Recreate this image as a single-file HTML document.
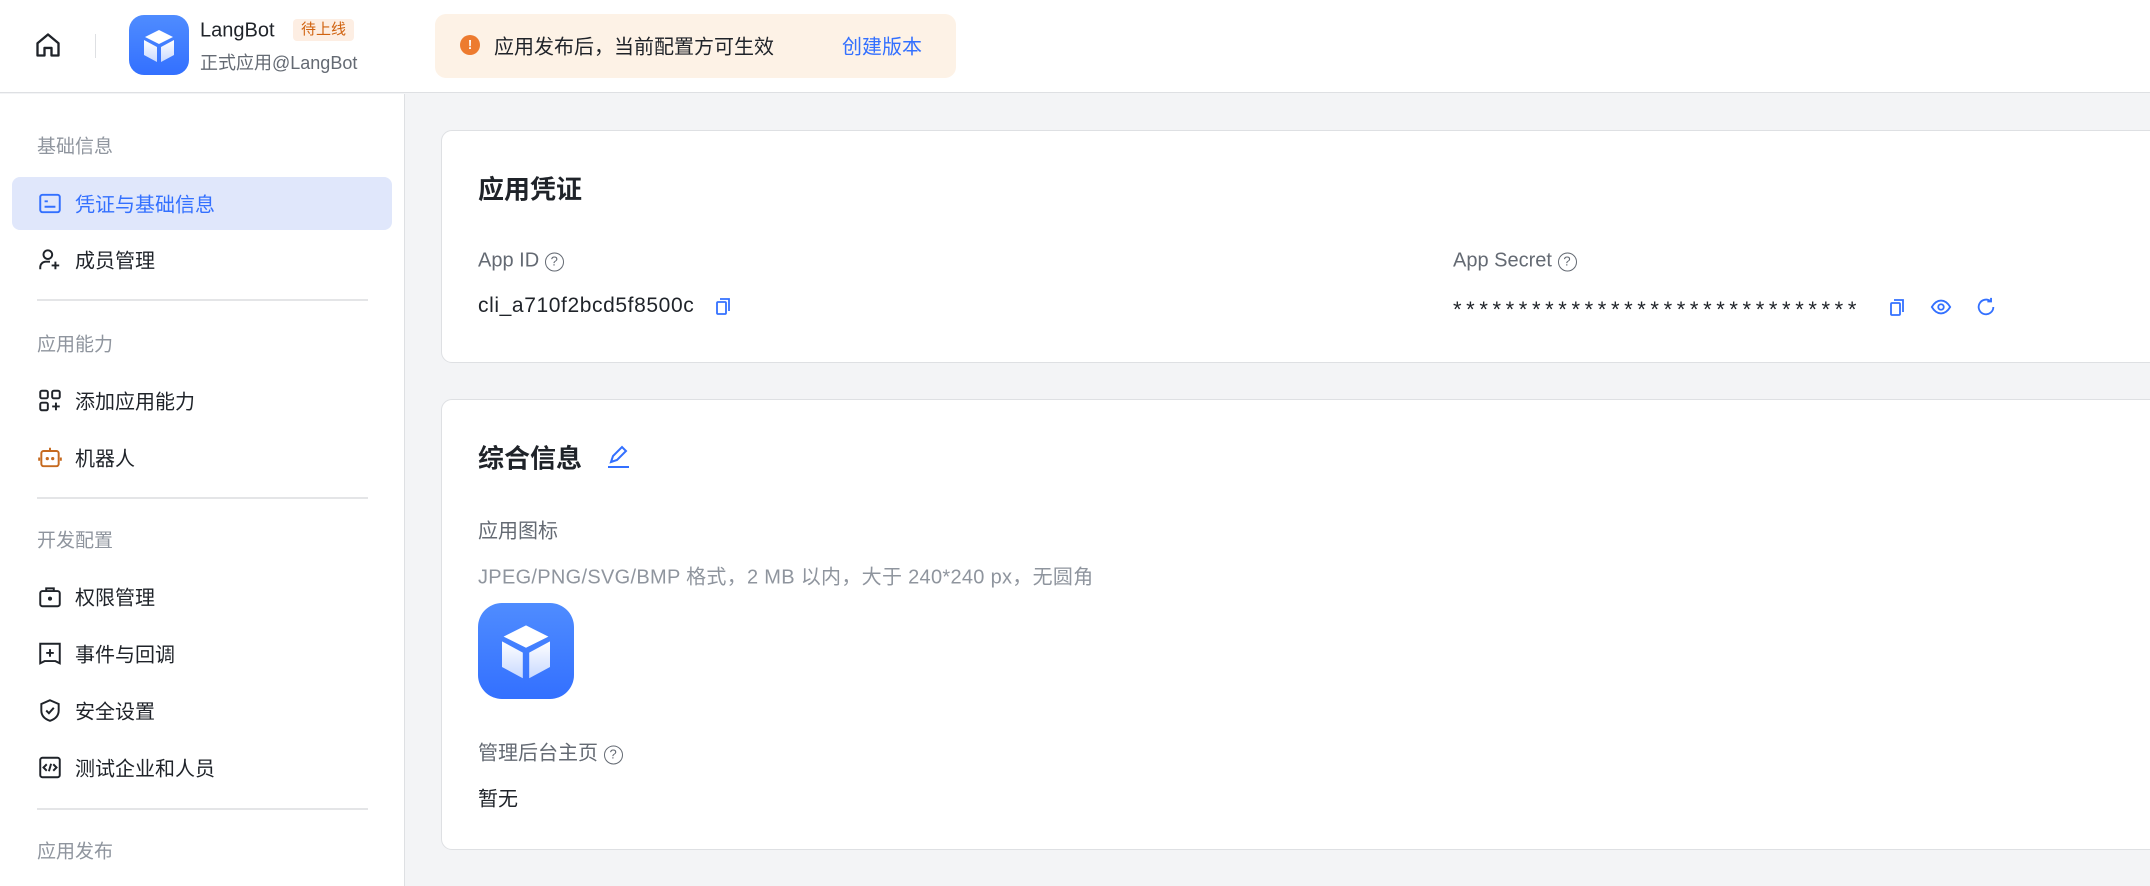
<!DOCTYPE html>
<html><head><meta charset="utf-8"><style>
*{margin:0;padding:0;box-sizing:border-box}
body{width:2150px;height:886px;overflow:hidden;background:#f3f4f6;font-family:"Liberation Sans","Noto Sans CJK SC",sans-serif;color:#1f2329;position:relative}
.a{position:absolute;white-space:nowrap}
.hdr{position:absolute;left:0;top:0;width:2150px;height:93px;background:#fff;border-bottom:1px solid #dee0e3}
.side{position:absolute;left:0;top:94px;width:405px;height:792px;background:#fff;border-right:1px solid #dee0e3}
.grp{position:absolute;left:37px;font-size:19px;color:#8f959e;transform:translateY(-50%)}
.item{position:absolute;left:37px;font-size:20px;color:#1f2329;transform:translateY(-50%);display:flex;align-items:center}
.item svg{margin-right:12px}
.div{position:absolute;left:37px;width:331px;height:2px;background:#e4e5e7}
.card{position:absolute;left:441px;width:1720px;background:#fff;border:1px solid #dee0e3;border-radius:11px}
.lbl{font-size:20px;color:#646a73}
.c{transform:translateY(-50%)}
</style></head><body>
<div class="hdr"></div>
<svg class="a" style="left:34px;top:31px" width="28" height="28" viewBox="0 0 24 24" fill="none" stroke="#1f2329" stroke-width="2" stroke-linejoin="round"><path d="M3 10.5 12 3l9 7.5V21h-6v-6.5h-6V21H3z"/></svg>
<div class="a" style="left:95px;top:34px;width:1px;height:24px;background:#dee0e3"></div>
<svg class="a" style="left:129px;top:15px" width="60" height="60" viewBox="0 0 60 60"><defs><linearGradient id="g" x1="0" y1="0" x2="0" y2="1"><stop offset="0" stop-color="#4f8cff"/><stop offset="1" stop-color="#3370ff"/></linearGradient><linearGradient id="f" x1="0" y1="0" x2="0" y2="1"><stop offset="0" stop-color="#fff"/><stop offset="1" stop-color="#c8d9ff"/></linearGradient></defs><rect width="60" height="60" rx="15" fill="url(#g)"/><path d="M30 15 44 22 30 29 16 22z" fill="#fff"/><path d="M15 25 28 32V47L15 40z" fill="url(#f)"/><path d="M45 25 32 32V47L45 40z" fill="url(#f)"/></svg>
<div class="a c" style="left:200px;top:31px;font-size:20px;font-weight:500">LangBot</div>
<div class="a" style="left:293px;top:19px;width:61px;height:22px;background:#fdeee3;border-radius:4px;color:#d0620f;font-size:15px;line-height:22px;text-align:center">待上线</div>
<div class="a c" style="left:200px;top:62px;font-size:18px;color:#646a73">正式应用@LangBot</div>
<div class="a" style="left:435px;top:14px;width:521px;height:64px;background:#fdf2e6;border-radius:11px"></div>
<div class="a" style="left:460px;top:35px;width:20px;height:20px;border-radius:50%;background:#ed7b2f;color:#fff;font-size:13px;font-weight:bold;line-height:20px;text-align:center">!</div>
<div class="a c" style="left:494px;top:45px;font-size:20px">应用发布后，当前配置方可生效</div>
<div class="a c" style="left:842px;top:45px;font-size:20px;color:#3370ff">创建版本</div>

<div class="side"></div>
<div class="grp" style="top:145px">基础信息</div>
<div class="a" style="left:12px;top:177px;width:380px;height:53px;background:#e0e7fb;border-radius:8px"></div>
<div class="item" style="top:203px;color:#3370ff"><svg width="26" height="26" viewBox="0 0 24 24" fill="none" stroke="#3370ff" stroke-width="1.8"><rect x="3" y="4" width="18" height="16" rx="2"/><path d="M7 10h3M7 15h10"/></svg>凭证与基础信息</div>
<div class="item" style="top:259px"><svg width="26" height="26" viewBox="0 0 24 24" fill="none" stroke="#1f2329" stroke-width="1.8"><circle cx="10" cy="7.5" r="4"/><path d="M3 21v-2a5 5 0 0 1 5-5h4M17 14v7M13.5 17.5h7"/></svg>成员管理</div>
<div class="div" style="top:299px"></div>
<div class="grp" style="top:343px">应用能力</div>
<div class="item" style="top:400px"><svg width="26" height="26" viewBox="0 0 24 24" fill="none" stroke="#1f2329" stroke-width="1.8"><rect x="3" y="3" width="7" height="7" rx="1.5"/><rect x="14" y="3" width="7" height="7" rx="1.5"/><rect x="3" y="14" width="7" height="7" rx="1.5"/><path d="M17.5 14v7M14 17.5h7"/></svg>添加应用能力</div>
<div class="item" style="top:457px"><svg width="26" height="26" viewBox="0 0 24 24" fill="none" stroke="#c66a1f" stroke-width="1.8"><rect x="4" y="6" width="16" height="14" rx="2"/><path d="M12 3v3M2 12v3M22 12v3"/><circle cx="9.5" cy="13" r=".6" fill="#c66a1f"/><circle cx="14.5" cy="13" r=".6" fill="#c66a1f"/></svg>机器人</div>
<div class="div" style="top:497px"></div>
<div class="grp" style="top:539px">开发配置</div>
<div class="item" style="top:596px"><svg width="26" height="26" viewBox="0 0 24 24" fill="none" stroke="#1f2329" stroke-width="1.8"><rect x="3" y="7" width="18" height="14" rx="2"/><path d="M8.5 7V4.5h7V7"/><circle cx="12" cy="14" r="1" fill="#1f2329"/></svg>权限管理</div>
<div class="item" style="top:653px"><svg width="26" height="26" viewBox="0 0 24 24" fill="none" stroke="#1f2329" stroke-width="1.8"><path d="M3 3h18v18l-4-2H7l-4 2z"/><path d="M12 8v7M8.5 11.5h7"/></svg>事件与回调</div>
<div class="item" style="top:710px"><svg width="26" height="26" viewBox="0 0 24 24" fill="none" stroke="#1f2329" stroke-width="1.8"><path d="M12 2.5 20 6v6c0 5-3.5 8-8 9.5C7.5 20 4 17 4 12V6z"/><path d="m8.5 12 2.5 2.5 4.5-5"/></svg>安全设置</div>
<div class="item" style="top:767px"><svg width="26" height="26" viewBox="0 0 24 24" fill="none" stroke="#1f2329" stroke-width="1.8"><rect x="3" y="3" width="18" height="18" rx="2"/><path d="m9 9-3 3 3 3M15 9l3 3-3 3M13 8.5l-2 7"/></svg>测试企业和人员</div>
<div class="div" style="top:808px"></div>
<div class="grp" style="top:850px">应用发布</div>

<div class="card" style="top:130px;height:233px"></div>
<div class="a c" style="left:478px;top:188px;font-size:26px;font-weight:600">应用凭证</div>
<div class="a c lbl" style="left:478px;top:261px">App ID <span style="display:inline-block;width:19px;height:19px;border:1.6px solid #646a73;border-radius:50%;font-size:13px;line-height:16px;text-align:center;vertical-align:1px">?</span></div>
<div class="a c" style="left:478px;top:306px;font-size:21px;letter-spacing:0.6px">cli_a710f2bcd5f8500c</div>
<svg class="a" style="left:713px;top:296px" width="20" height="20" viewBox="0 0 20 20" fill="none" stroke="#3370ff" stroke-width="1.8"><rect x="4" y="6" width="9" height="12" rx="1"/><path d="M7 3h9v12"/></svg>
<div class="a c lbl" style="left:1453px;top:261px">App Secret <span style="display:inline-block;width:19px;height:19px;border:1.6px solid #646a73;border-radius:50%;font-size:13px;line-height:16px;text-align:center;vertical-align:1px">?</span></div>
<div class="a c" style="left:1453px;top:310px;font-size:22px;letter-spacing:4.6px">*******************************</div>
<svg class="a" style="left:1887px;top:297px" width="20" height="20" viewBox="0 0 20 20" fill="none" stroke="#3370ff" stroke-width="1.8"><rect x="4" y="6" width="9" height="12" rx="1"/><path d="M7 3h9v12"/></svg>
<svg class="a" style="left:1930px;top:296px" width="22" height="22" viewBox="0 0 24 24" fill="none" stroke="#3370ff" stroke-width="2"><path d="M2 12c3-5 7-7 10-7s7 2 10 7c-3 5-7 7-10 7S5 17 2 12z"/><circle cx="12" cy="12" r="3"/></svg>
<svg class="a" style="left:1975px;top:296px" width="22" height="22" viewBox="0 0 24 24" fill="none" stroke="#3370ff" stroke-width="2"><path d="M20 12a8 8 0 1 1-3-6.3"/><path d="M17.5 2v4h-4"/></svg>

<div class="card" style="top:399px;height:451px"></div>
<div class="a c" style="left:478px;top:457px;font-size:26px;font-weight:600">综合信息</div>
<svg class="a" style="left:605px;top:442px" width="26" height="28" viewBox="0 0 26 28" fill="none" stroke="#3370ff" stroke-width="2"><path d="M6 20 8 14 17 5l4 4-9 9z"/><path d="M3 25h21"/></svg>
<div class="a c lbl" style="left:478px;top:529px">应用图标</div>
<div class="a c" style="left:478px;top:575px;font-size:20px;color:#8f959e;letter-spacing:0.3px">JPEG/PNG/SVG/BMP 格式，2 MB 以内，大于 240*240 px，无圆角</div>
<svg class="a" style="left:478px;top:603px" width="96" height="96" viewBox="0 0 60 60"><rect width="60" height="60" rx="15" fill="url(#g)"/><path d="M30 14 44 21 30 28 16 21z" fill="#fff"/><path d="M15 24 28 31V47L15 40z" fill="url(#f)"/><path d="M45 24 32 31V47L45 40z" fill="url(#f)"/></svg>
<div class="a c lbl" style="left:478px;top:751px">管理后台主页 <span style="display:inline-block;width:19px;height:19px;border:1.6px solid #646a73;border-radius:50%;font-size:13px;line-height:16px;text-align:center;vertical-align:1px">?</span></div>
<div class="a c" style="left:478px;top:797px;font-size:20px">暂无</div>
</body></html>
